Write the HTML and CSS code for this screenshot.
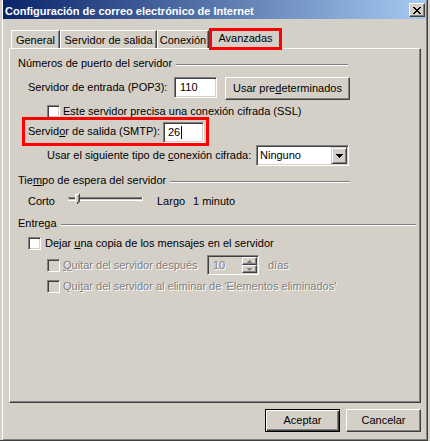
FILE: index.html
```
<!DOCTYPE html>
<html lang="es">
<head>
<meta charset="utf-8">
<title>Configuración de correo electrónico de Internet</title>
<link rel="stylesheet" href="styles.css">
</head>
<body>
<div class="window">
  <div class="titlebar">
    <span class="title">Configuración de correo electrónico de Internet</span>
    <button class="close" aria-label="Cerrar">
      <svg width="8" height="7" viewBox="0 0 8 7" shape-rendering="crispEdges"><path d="M0 0h2v1h-2zM6 0h2v1h-2zM1 1h2v1h-2zM5 1h2v1h-2zM2 2h4v1h-4zM3 3h2v1h-2zM2 4h4v1h-4zM1 5h2v1h-2zM5 5h2v1h-2zM0 6h2v1h-2zM6 6h2v1h-2z" fill="#000"/></svg>
    </button>
  </div>

  <div class="tabs">
    <div class="tab tab-general">General</div>
    <div class="tab tab-salida">Servidor de salida</div>
    <div class="tab tab-conexion">Conexión</div>
    <div class="tab tab-avanzadas">Avanzadas</div>
  </div>

  <div class="panel">
    <div class="group group-ports"><span>Números de puerto del servidor</span><i class="etch"></i></div>

    <div class="row row-pop3">
      <span class="lbl lbl-pop3">Servidor de entrada (POP3):</span>
      <div class="field field-pop3">110</div>
      <button class="btn btn-defaults">Usar pre<u>d</u>eterminados</button>
    </div>

    <div class="row row-ssl">
      <span class="cb"></span>
      <span class="cb-text">Este servidor precisa una conexión cifrada (SSL)</span>
    </div>

    <div class="smtp">
      <span class="lbl lbl-smtp">Servid<u>o</u>r de salida (SMTP):</span>
      <div class="field field-smtp">26<span class="caret"></span></div>
    </div>

    <div class="row row-cipher">
      <span class="lbl lbl-cipher">Usar el siguiente tipo de <u>c</u>onexión cifrada:</span>
      <div class="select">
        <span class="select-text">Ninguno</span>
        <span class="select-btn"><svg width="7" height="4" viewBox="0 0 7 4" shape-rendering="crispEdges"><path d="M0 0h7v1h-7zM1 1h5v1h-5zM2 2h3v1h-3zM3 3h1v1h-1z" fill="#000"/></svg></span>
      </div>
    </div>

    <div class="group group-timeout"><span>Tie<u>m</u>po de espera del servidor</span><i class="etch"></i></div>

    <div class="row row-timeout">
      <span class="lbl lbl-short">Corto</span>
      <svg class="slider" width="75" height="16" viewBox="0 0 75 16" shape-rendering="crispEdges">
        <rect x="0" y="4" width="75" height="1" fill="#808080"/>
        <rect x="1" y="5" width="73" height="1" fill="#404040"/>
        <rect x="1" y="6" width="73" height="1" fill="#d4d0c8"/>
        <rect x="0" y="7" width="75" height="1" fill="#ffffff"/>
        <rect x="74" y="4" width="1" height="4" fill="#ffffff"/>
        <path d="M7 1h5v7l-2 2h-1l-2-2z" fill="#d4d0c8"/>
        <rect x="7" y="1" width="5" height="1" fill="#ffffff"/>
        <rect x="7" y="1" width="1" height="8" fill="#ffffff"/>
        <rect x="11" y="1" width="1" height="8" fill="#404040"/>
        <rect x="10" y="2" width="1" height="7" fill="#808080"/>
        <rect x="9" y="9" width="2" height="1" fill="#404040"/>
        <rect x="9" y="10" width="1" height="1" fill="#404040"/>
      </svg>
      <span class="lbl lbl-long">Largo</span>
      <span>1 minuto</span>
    </div>

    <div class="group group-delivery"><span>Entrega</span><i class="etch"></i></div>

    <div class="row row-keep">
      <span class="cb"></span>
      <span class="cb-text cb-text-wide">Dejar <u>u</u>na copia de los mensajes en el servidor</span>
    </div>

    <div class="row row-after">
      <span class="cb disabled"></span>
      <span class="cb-text dis lbl-after"><u>Q</u>uitar del servidor después</span>
      <div class="spin">
        <span class="spin-text dis">10</span>
        <span class="spin-btns">
          <span class="spin-btn"><svg width="5" height="3" viewBox="0 0 5 3" shape-rendering="crispEdges"><path d="M2 0h1v1h-1zM1 1h3v1h-3zM0 2h5v1h-5z" fill="#808080"/></svg></span>
          <span class="spin-btn"><svg width="5" height="3" viewBox="0 0 5 3" shape-rendering="crispEdges"><path d="M0 0h5v1h-5zM1 1h3v1h-3zM2 2h1v1h-1z" fill="#808080"/></svg></span>
        </span>
      </div>
      <span class="dis days">días</span>
    </div>

    <div class="row row-deleted">
      <span class="cb disabled"></span>
      <span class="cb-text dis">Qui<u>t</u>ar del servidor al eliminar de 'Elementos eliminados'</span>
    </div>
  </div>

  <div class="buttons">
    <button class="btn btn-dialog btn-default">Aceptar</button>
    <button class="btn btn-dialog">Cancelar</button>
  </div>
</div>
</body>
</html>
```

FILE: styles.css
```
* {
  box-sizing: border-box;
}

body {
  margin: 0;
  background: #d4d0c8;
  font: 11px/13px "Liberation Sans", Arial, sans-serif;
  color: #000;
}

u {
  text-decoration: underline;
  text-underline-offset: 1px;
}

.window {
  width: 428px;
  height: 441px;
  background: #d4d0c8;
  border-right: 1px solid #404040;
  border-bottom: 1px solid #404040;
  box-shadow: inset 2px 0 0 #d4d0c8, inset 3px 0 0 #fff, inset -1px -1px 0 #808080;
  display: flex;
  flex-direction: column;
}

/* Title bar */
.titlebar {
  height: 19px;
  margin: 0 1px 0 3px;
  padding-left: 2px;
  background: linear-gradient(to right, #0a246a, #a6caf0);
  display: flex;
  align-items: flex-start;
  justify-content: space-between;
}

.title {
  color: #fff;
  font-weight: bold;
  line-height: 13px;
  margin-top: 5px;
  white-space: nowrap;
}

.close {
  width: 16px;
  height: 14px;
  margin: 3px 1px 0 0;
  padding: 0;
  background: #d4d0c8;
  border: 1px solid;
  border-color: #fff #404040 #404040 #fff;
  box-shadow: inset -1px -1px 0 #808080;
  display: flex;
  align-items: center;
  justify-content: center;
}

.close svg {
  display: block;
}

/* Tabs */
.tabs {
  display: flex;
  align-items: flex-end;
  height: 21px;
  margin-top: 8px;
  padding-left: 11px;
}

.tab {
  height: 18px;
  padding-top: 3px;
  text-align: center;
  line-height: 13px;
  white-space: nowrap;
  border-top: 1px solid #fff;
  border-left: 1px solid #fff;
  border-right: 1px solid #404040;
  box-shadow: inset -1px 0 0 #808080;
  background: #d4d0c8;
}

.tab-general { width: 49px; }
.tab-salida { width: 97px; }
.tab-conexion { width: 52px; }

.tab-avanzadas {
  width: 73px;
  height: 22px;
  margin-bottom: -2px;
  padding-top: 3px;
  position: relative;
  z-index: 1;
  outline: 3px solid #ff0000;
  outline-offset: -3px;
}

/* Panel */
.panel {
  margin-left: 9px;
  width: 412px;
  height: 355px;
  border: 1px solid;
  border-color: #fff #404040 #404040 #fff;
  box-shadow: inset -1px -1px 0 #808080;
  display: flex;
  flex-direction: column;
}

.group {
  display: flex;
  height: 13px;
  padding-left: 8px;
  white-space: nowrap;
  flex: none;
}

.etch {
  flex: 1;
  height: 2px;
  margin: 7px 0 0 4px;
  border-top: 1px solid #808080;
  border-bottom: 1px solid #fff;
}

.group-ports { margin-top: 8px; width: 338px; }
.group-timeout { margin-top: 8px; width: 340px; }
.group-delivery { margin-top: 8px; width: 406px; }

.row {
  display: flex;
  align-items: center;
  white-space: nowrap;
  flex: none;
}

.lbl { flex: none; }

.row-pop3 {
  margin-top: 7px;
  height: 23px;
  padding-left: 18px;
  align-items: flex-start;
}

.row-pop3 .lbl { line-height: 21px; }
.lbl-pop3 { width: 146px; }

.field {
  height: 21px;
  border: 1px solid;
  border-color: #808080 #fff #fff #808080;
  box-shadow: inset 1px 1px 0 #404040, inset -1px -1px 0 #d4d0c8;
  background: #fff;
  padding-left: 5px;
  line-height: 19px;
  display: flex;
  align-items: center;
  flex: none;
}

.field-pop3 { width: 43px; }

.btn {
  font: inherit;
  color: #000;
  background: #d4d0c8;
  border: 1px solid;
  border-color: #fff #404040 #404040 #fff;
  box-shadow: inset -1px -1px 0 #808080;
  padding: 0;
  height: 23px;
  white-space: nowrap;
}

.btn-defaults {
  margin-left: 8px;
  width: 125px;
}

.row-ssl {
  margin-top: 4px;
  height: 14px;
  padding-left: 37px;
}

.cb {
  width: 13px;
  height: 13px;
  flex: none;
  border: 1px solid;
  border-color: #808080 #fff #fff #808080;
  box-shadow: inset 1px 1px 0 #404040, inset -1px -1px 0 #d4d0c8;
  background: #fff;
}

.cb.disabled { background: #d4d0c8; }

.cb-text { margin-left: 3px; }
.cb-text-wide { margin-left: 4px; }

.smtp {
  margin: -1px 0 0 12px;
  width: 187px;
  height: 29px;
  flex: none;
  border: 3px solid #ff0000;
  padding-left: 3px;
  display: flex;
  align-items: center;
  white-space: nowrap;
}

.lbl-smtp { width: 135px; }

.field-smtp {
  width: 41px;
  padding-left: 4px;
  margin-top: 1px;
}

.caret {
  display: inline-block;
  width: 1px;
  height: 13px;
  background: #000;
  margin-left: 1px;
}

.row-cipher {
  margin-top: -1px;
  height: 21px;
  padding-left: 37px;
}

.lbl-cipher { width: 209px; }

.select {
  width: 93px;
  height: 21px;
  flex: none;
  border: 1px solid;
  border-color: #808080 #fff #fff #808080;
  box-shadow: inset 1px 1px 0 #404040, inset -1px -1px 0 #d4d0c8;
  background: #fff;
  padding: 1px 1px 1px 3px;
  display: flex;
  align-items: center;
}

.select-text { flex: 1; }

.select-btn {
  width: 16px;
  height: 17px;
  background: #d4d0c8;
  border: 1px solid;
  border-color: #d4d0c8 #404040 #404040 #d4d0c8;
  box-shadow: inset 1px 1px 0 #fff, inset -1px -1px 0 #808080;
  display: flex;
  align-items: center;
  justify-content: center;
}

.select-btn svg,
.spin-btn svg,
.slider { display: block; }

.row-timeout {
  margin-top: 6px;
  height: 16px;
  padding-left: 18px;
}

.lbl-short { width: 40px; }
.lbl-long { width: 36px; margin-left: 14px; }

.row-keep {
  margin-top: 6px;
  height: 15px;
  padding-left: 18px;
}

.row-after {
  margin-top: 4px;
  height: 20px;
  padding-left: 37px;
}

.dis {
  color: #808080;
  text-shadow: 1px 1px 0 #fff;
}

.lbl-after { width: 144px; }

.spin {
  width: 52px;
  height: 20px;
  flex: none;
  border: 1px solid;
  border-color: #808080 #fff #fff #808080;
  box-shadow: inset 1px 1px 0 #404040, inset -1px -1px 0 #d4d0c8;
  background: #d4d0c8;
  padding: 1px;
  display: flex;
}

.spin-text {
  flex: 1;
  padding-left: 4px;
  line-height: 16px;
}

.spin-btns {
  width: 15px;
  display: flex;
  flex-direction: column;
}

.spin-btn {
  height: 8px;
  background: #d4d0c8;
  border: 1px solid;
  border-color: #fff #404040 #404040 #fff;
  box-shadow: inset -1px -1px 0 #808080;
  display: flex;
  align-items: center;
  justify-content: center;
}

.days { margin-left: 9px; }

.row-deleted {
  margin-top: 4px;
  height: 15px;
  padding-left: 37px;
}

/* Dialog buttons */
.buttons {
  display: flex;
  justify-content: flex-end;
  gap: 6px;
  margin-top: 6px;
  padding-right: 6px;
}

.btn-dialog { width: 75px; }

.btn-default {
  border-color: #000;
  box-shadow: inset 1px 1px 0 #fff, inset -1px -1px 0 #404040, inset -2px -2px 0 #808080;
}
```
